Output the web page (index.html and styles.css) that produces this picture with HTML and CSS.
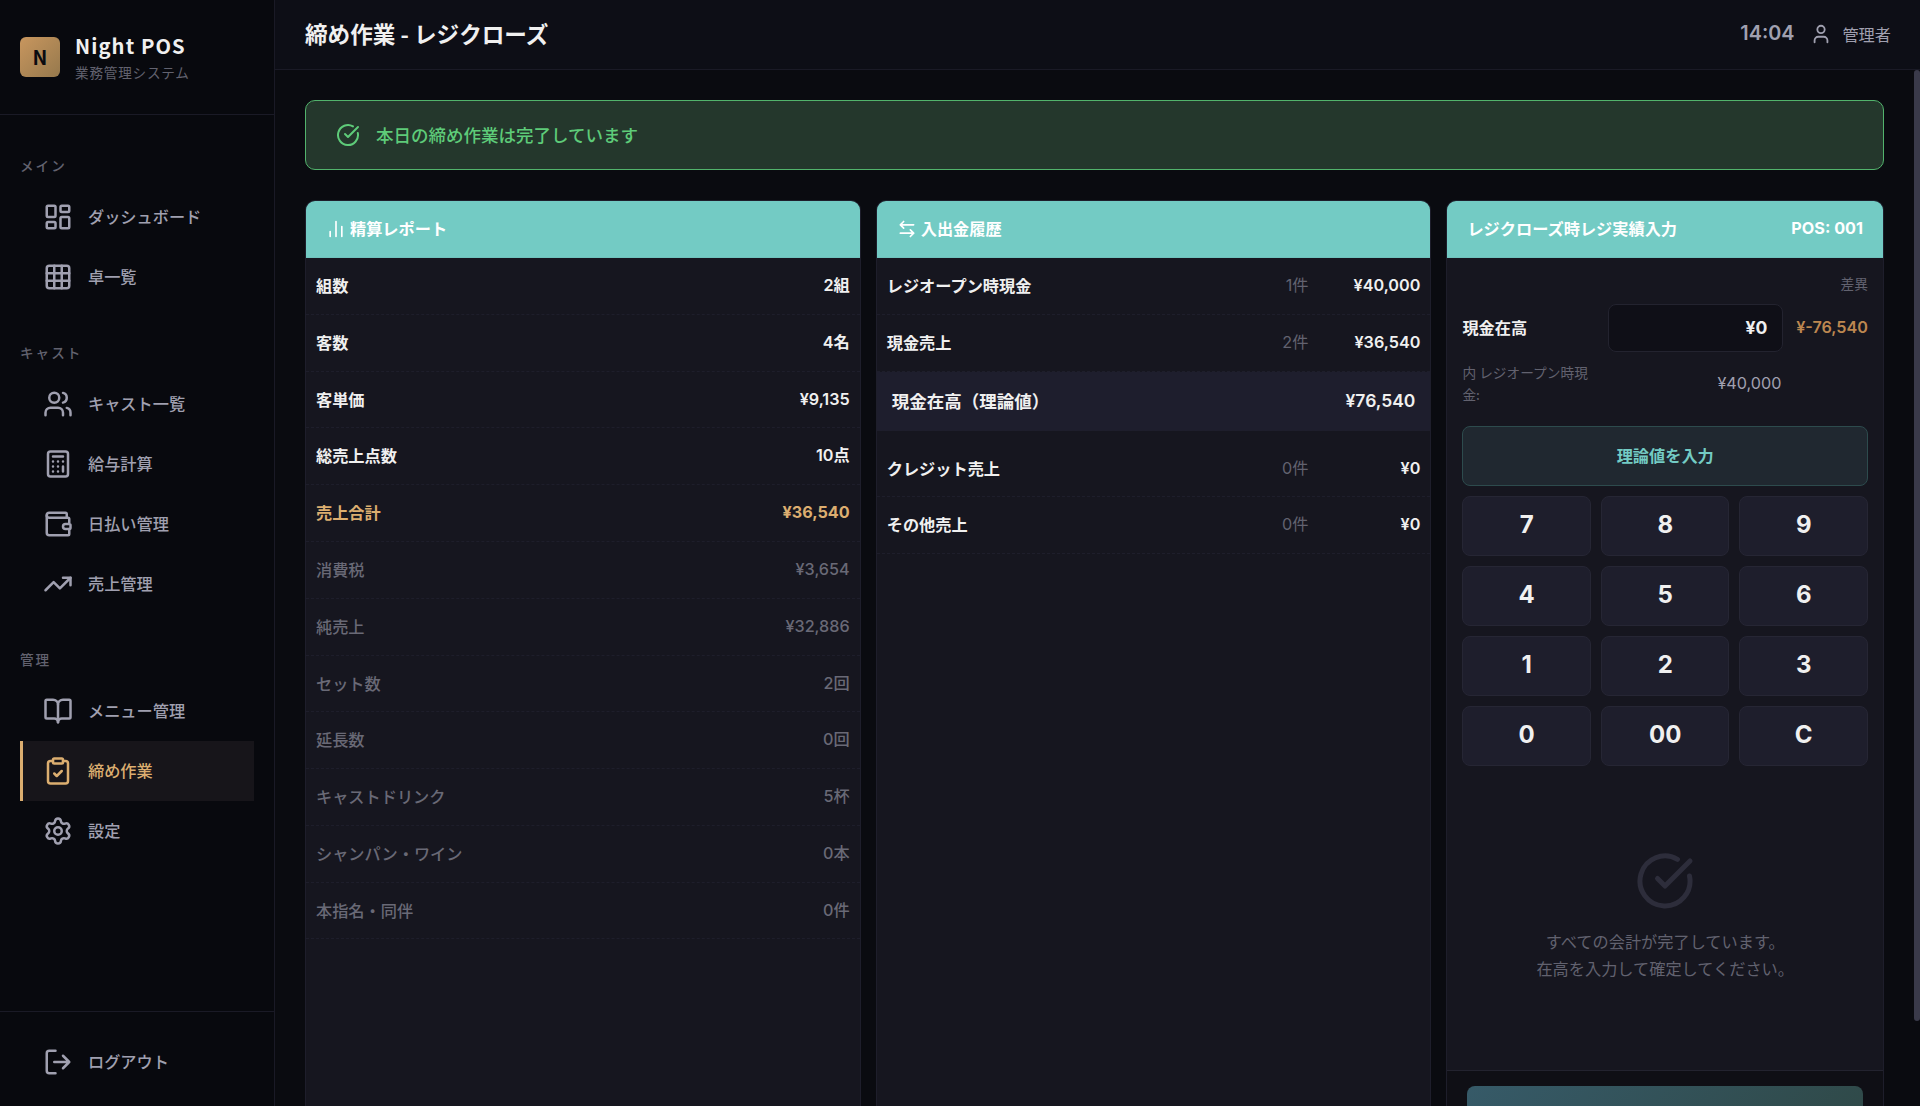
FILE: index.html
```html
<!DOCTYPE html>
<html lang="ja">
<head>
    <meta charset="UTF-8">
    <meta name="viewport" content="width=device-width, initial-scale=1.0">
    <title>締め作業 - Night POS</title>
    <link rel="stylesheet" href="styles.css">
</head>
<body>
    <div class="app">
        <!-- Sidebar -->
        <aside class="sidebar">
            <div class="sidebar-header">
                <div class="logo-icon">N</div>
                <div>
                    <div class="logo-title">Night POS</div>
                    <div class="logo-sub">業務管理システム</div>
                </div>
            </div>

            <nav class="sidebar-nav">
                <div class="nav-section">
                    <div class="nav-label">メイン</div>
                    <a class="nav-item">
                        <svg class="icon" viewBox="0 0 24 24"><rect x="3" y="3" width="7" height="9" rx="1"/><rect x="14" y="3" width="7" height="5" rx="1"/><rect x="14" y="12" width="7" height="9" rx="1"/><rect x="3" y="16" width="7" height="5" rx="1"/></svg>
                        <span>ダッシュボード</span>
                    </a>
                    <a class="nav-item">
                        <svg class="icon" viewBox="0 0 24 24"><rect x="3" y="3" width="18" height="18" rx="2"/><path d="M3 9h18M3 15h18M9 3v18M15 3v18"/></svg>
                        <span>卓一覧</span>
                    </a>
                </div>

                <div class="nav-section">
                    <div class="nav-label">キャスト</div>
                    <a class="nav-item">
                        <svg class="icon" viewBox="0 0 24 24"><path d="M16 21v-2a4 4 0 0 0-4-4H6a4 4 0 0 0-4 4v2"/><circle cx="9" cy="7" r="4"/><path d="M22 21v-2a4 4 0 0 0-3-3.87M16 3.13a4 4 0 0 1 0 7.75"/></svg>
                        <span>キャスト一覧</span>
                    </a>
                    <a class="nav-item">
                        <svg class="icon" viewBox="0 0 24 24"><rect x="4" y="2" width="16" height="20" rx="2"/><path d="M8 6h8M16 14v4M16 10h.01M12 10h.01M8 10h.01M12 14h.01M8 14h.01M12 18h.01M8 18h.01"/></svg>
                        <span>給与計算</span>
                    </a>
                    <a class="nav-item">
                        <svg class="icon" viewBox="0 0 24 24"><path d="M19 7V4a1 1 0 0 0-1-1H5a2 2 0 0 0 0 4h15a1 1 0 0 1 1 1v4h-3a2 2 0 0 0 0 4h3a1 1 0 0 0 1-1v-2a1 1 0 0 0-1-1"/><path d="M3 5v14a2 2 0 0 0 2 2h15a1 1 0 0 0 1-1v-4"/></svg>
                        <span>日払い管理</span>
                    </a>
                    <a class="nav-item">
                        <svg class="icon" viewBox="0 0 24 24"><path d="M22 7l-8.5 8.5-5-5L2 17"/><path d="M16 7h6v6"/></svg>
                        <span>売上管理</span>
                    </a>
                </div>

                <div class="nav-section">
                    <div class="nav-label">管理</div>
                    <a class="nav-item">
                        <svg class="icon" viewBox="0 0 24 24"><path d="M12 7v14"/><path d="M3 18a1 1 0 0 1-1-1V4a1 1 0 0 1 1-1h5a4 4 0 0 1 4 4 4 4 0 0 1 4-4h5a1 1 0 0 1 1 1v13a1 1 0 0 1-1 1h-6a3 3 0 0 0-3 3 3 3 0 0 0-3-3z"/></svg>
                        <span>メニュー管理</span>
                    </a>
                    <a class="nav-item active">
                        <svg class="icon" viewBox="0 0 24 24"><rect x="8" y="2" width="8" height="4" rx="1"/><path d="M16 4h2a2 2 0 0 1 2 2v14a2 2 0 0 1-2 2H6a2 2 0 0 1-2-2V6a2 2 0 0 1 2-2h2"/><path d="M9 14l2 2 4-4"/></svg>
                        <span>締め作業</span>
                    </a>
                    <a class="nav-item">
                        <svg class="icon" viewBox="0 0 24 24"><path d="M9.671 4.136a2.34 2.34 0 0 1 4.659 0 2.34 2.34 0 0 0 3.319 1.915 2.34 2.34 0 0 1 2.33 4.033 2.34 2.34 0 0 0 0 3.831 2.34 2.34 0 0 1-2.33 4.033 2.34 2.34 0 0 0-3.319 1.915 2.34 2.34 0 0 1-4.659 0 2.34 2.34 0 0 0-3.32-1.915 2.34 2.34 0 0 1-2.33-4.033 2.34 2.34 0 0 0 0-3.831A2.34 2.34 0 0 1 6.35 6.051a2.34 2.34 0 0 0 3.319-1.915"/><circle cx="12" cy="12" r="3"/></svg>
                        <span>設定</span>
                    </a>
                </div>
            </nav>

            <div class="sidebar-footer">
                <a class="nav-item">
                    <svg class="icon" viewBox="0 0 24 24"><path d="M10 3H5a2 2 0 0 0-2 2v14a2 2 0 0 0 2 2h5"/><path d="M16 17l5-5-5-5M21 12H9"/></svg>
                    <span>ログアウト</span>
                </a>
            </div>
        </aside>

        <!-- Main -->
        <div class="main">
            <header class="top-header">
                <h1>締め作業 - レジクローズ</h1>
                <div class="header-right">
                    <span class="clock">14:04</span>
                    <div class="user">
                        <svg class="icon" viewBox="0 0 24 24"><path d="M19 21v-2a4 4 0 0 0-4-4H9a4 4 0 0 0-4 4v2"/><circle cx="12" cy="7" r="4"/></svg>
                        <span>管理者</span>
                    </div>
                </div>
            </header>

            <main class="content">
                <div class="alert">
                    <svg class="icon" viewBox="0 0 24 24"><path d="M21.801 10A10 10 0 1 1 17 3.335"/><path d="M9 11l3 3L22 4"/></svg>
                    <span>本日の締め作業は完了しています</span>
                </div>

                <div class="panels">
                    <!-- Settlement report -->
                    <section class="panel">
                        <div class="panel-header">
                            <span class="panel-title"><svg class="icon" viewBox="0 0 24 24"><path d="M5 21v-6M12 21V3M19 21V9"/></svg>精算レポート</span>
                        </div>
                        <div class="row"><span>組数</span><span class="value">2組</span></div>
                        <div class="row"><span>客数</span><span class="value">4名</span></div>
                        <div class="row"><span>客単価</span><span class="value">¥9,135</span></div>
                        <div class="row"><span>総売上点数</span><span class="value">10点</span></div>
                        <div class="row total"><span>売上合計</span><span class="value">¥36,540</span></div>
                        <div class="row sub"><span>消費税</span><span class="value">¥3,654</span></div>
                        <div class="row sub"><span>純売上</span><span class="value">¥32,886</span></div>
                        <div class="row sub"><span>セット数</span><span class="value">2回</span></div>
                        <div class="row sub"><span>延長数</span><span class="value">0回</span></div>
                        <div class="row sub"><span>キャストドリンク</span><span class="value">5杯</span></div>
                        <div class="row sub"><span>シャンパン・ワイン</span><span class="value">0本</span></div>
                        <div class="row sub"><span>本指名・同伴</span><span class="value">0件</span></div>
                    </section>

                    <!-- Cash flow history -->
                    <section class="panel">
                        <div class="panel-header">
                            <span class="panel-title"><svg class="icon" viewBox="0 0 24 24"><path d="M8 3L4 7l4 4M4 7h16M16 21l4-4-4-4M20 17H4"/></svg>入出金履歴</span>
                        </div>
                        <div class="row"><span>レジオープン時現金</span><span class="count">1件</span><span class="value amount">¥40,000</span></div>
                        <div class="row"><span>現金売上</span><span class="count">2件</span><span class="value amount">¥36,540</span></div>
                        <div class="row highlight"><span>現金在高（理論値）</span><span class="value">¥76,540</span></div>
                        <div class="row"><span>クレジット売上</span><span class="count">0件</span><span class="value amount">¥0</span></div>
                        <div class="row"><span>その他売上</span><span class="count">0件</span><span class="value amount">¥0</span></div>
                    </section>

                    <!-- Register input -->
                    <section class="panel">
                        <div class="panel-header">
                            <span class="panel-title">レジクローズ時レジ実績入力</span>
                            <span class="pos-no">POS: 001</span>
                        </div>
                        <div class="register">
                            <div class="diff-label">差異</div>
                            <div class="cash-grid">
                                <span class="cash-label">現金在高</span>
                                <div class="cash-input">¥0</div>
                                <span class="cash-diff">¥-76,540</span>
                            </div>
                            <div class="cash-grid open-cash">
                                <span class="open-label">内 レジオープン時現金:</span>
                                <span class="open-value">¥40,000</span>
                            </div>
                            <button class="btn-theory">理論値を入力</button>
                            <div class="keypad">
                                <button>7</button><button>8</button><button>9</button>
                                <button>4</button><button>5</button><button>6</button>
                                <button>1</button><button>2</button><button>3</button>
                                <button>0</button><button>00</button><button>C</button>
                            </div>
                            <div class="done">
                                <svg class="icon" viewBox="0 0 24 24"><path d="M21.801 10A10 10 0 1 1 17 3.335"/><path d="M9 11l3 3L22 4"/></svg>
                                <p>すべての会計が完了しています。<br>在高を入力して確定してください。</p>
                            </div>
                        </div>
                        <div class="panel-footer">
                            <button class="btn-confirm" disabled></button>
                        </div>
                    </section>
                </div>
                <div class="scrollbar"></div>
            </main>
        </div>
    </div>
</body>
</html>
```
FILE: styles.css
```css
* {
    margin: 0;
    padding: 0;
    box-sizing: border-box;
}
body {
    font-family: 'Noto Sans CJK JP', sans-serif;
    font-size: 16.2px;
    line-height: 1.6;
    background: #0a0b10;
    color: #f0f0f0;
    overflow: hidden;
}
.app {
    display: flex;
    height: 100vh;
}
.icon {
    fill: none;
    stroke: currentColor;
    stroke-width: 2;
    stroke-linecap: round;
    stroke-linejoin: round;
    flex-shrink: 0;
}
button {
    font: inherit;
}

/* Sidebar */
.sidebar {
    width: 275px;
    flex-shrink: 0;
    display: flex;
    flex-direction: column;
    background: #08090e;
    border-right: 1px solid #1a1a26;
}
.sidebar-header {
    display: flex;
    align-items: center;
    gap: 15px;
    height: 115px;
    padding: 0 20px;
    border-bottom: 1px solid #1a1a26;
}
.logo-icon {
    width: 40px;
    height: 40px;
    display: flex;
    align-items: center;
    justify-content: center;
    border-radius: 6px;
    background: linear-gradient(135deg, #c8965e, #96794d);
    color: #0a0b10;
    font-size: 19.8px;
    font-weight: 700;
}
.logo-title {
    font-size: 20.2px;
    font-weight: 700;
    letter-spacing: 1.1px;
}
.logo-sub {
    font-size: 13.6px;
    letter-spacing: 0.8px;
    color: #62626f;
}
.sidebar-nav {
    flex: 1;
    padding: 40px 20px 0;
}
.nav-section {
    margin-bottom: 34.5px;
}
.nav-label {
    margin-bottom: 10.5px;
    font-size: 13.6px;
    font-weight: 500;
    letter-spacing: 2px;
    color: #62626f;
}
.nav-item {
    display: flex;
    align-items: center;
    gap: 15px;
    padding: 15px 20px;
    border-left: 3px solid transparent;
    color: #a0a0b0;
    font-weight: 500;
}
.nav-item .icon {
    width: 30px;
    height: 30px;
}
.nav-item.active {
    border-left-color: #dcae70;
    background: #17151a;
    color: #dcae70;
}
.sidebar-footer {
    padding: 20px 20px 14px;
    border-top: 1px solid #1a1a26;
}

/* Header */
.main {
    flex: 1;
    display: flex;
    flex-direction: column;
    min-width: 0;
}
.top-header {
    height: 70px;
    flex-shrink: 0;
    display: flex;
    align-items: center;
    justify-content: space-between;
    padding: 0 29px 0 30px;
    background: #0d0e16;
    border-bottom: 1px solid #1a1a26;
}
.top-header h1 {
    font-size: 22.6px;
    font-weight: 700;
}
.header-right, .user {
    display: flex;
    align-items: center;
    color: #a0a0b0;
}
.header-right {
    gap: 16px;
}
.user {
    gap: 10px;
}
.user .icon {
    width: 22px;
    height: 22px;
}
.clock {
    font-family: 'Inter', sans-serif;
    font-size: 19.8px;
    font-weight: 600;
    position: relative;
    top: -1px;
}

/* Content */
.content {
    position: relative;
    flex: 1;
    min-height: 0;
    padding: 30px 36px 0 30px;
    overflow: hidden;
}
.scrollbar {
    position: absolute;
    top: 0;
    right: 0;
    width: 6px;
    height: 951px;
    border-radius: 3px;
    background: #3a3a4a;
}
.alert {
    display: flex;
    align-items: center;
    gap: 16px;
    height: 70px;
    margin-bottom: 30px;
    padding: 0 30px;
    border: 1px solid #52b36c;
    border-radius: 10px;
    background: #24372c;
    color: #5ecb79;
    font-size: 17.5px;
    font-weight: 500;
}
.alert .icon {
    width: 24px;
    height: 24px;
}
.panels {
    display: grid;
    grid-template-columns: 1.27fr 1.27fr 1fr;
    gap: 15px;
    height: 962px;
}
.panel {
    display: flex;
    flex-direction: column;
    border: 1px solid #1e1e2b;
    border-radius: 10px;
    background: #16161f;
    overflow: hidden;
}
.panel-header {
    display: flex;
    align-items: center;
    justify-content: space-between;
    padding: 15px 20px;
    background: #73cbc4;
    border-bottom: 1px solid #6fc3bd;
    color: #fff;
    font-weight: 700;
}
.panel-title {
    display: flex;
    align-items: center;
    gap: 4px;
}
.panel-title .icon {
    width: 20px;
    height: 20px;
}
.pos-no {
    font-family: 'Inter', sans-serif;
}

/* Rows */
.row {
    display: flex;
    align-items: center;
    justify-content: space-between;
    padding: 15px 10px;
    border-bottom: 1px dashed #1e1e2b;
    font-weight: 700;
    line-height: 25.8px;
}
.value, .count {
    font-family: 'Inter', 'Noto Sans CJK JP', sans-serif;
}
.value {
    font-weight: 600;
}
.count {
    margin-left: auto;
    color: #62626f;
    font-weight: 400;
}
.amount {
    width: 112px;
    text-align: right;
}
.row.total {
    color: #dcae70;
}
.row.total .value {
    font-weight: 700;
}
.row.sub {
    color: #696976;
    font-weight: 500;
}
.row.sub .value {
    font-weight: 500;
}
.row.highlight {
    margin-bottom: 10px;
    padding: 15px;
    background: #1e1e2d;
    font-size: 17.5px;
    line-height: 28px;
}

/* Register */
.register {
    flex: 1;
    padding: 15px;
}
.diff-label {
    margin-bottom: 9px;
    font-size: 13.7px;
    text-align: right;
    color: #62626f;
}
.cash-grid {
    display: grid;
    grid-template-columns: 136px 175px 1fr;
    gap: 10px;
    align-items: center;
}
.cash-label {
    font-weight: 700;
}
.cash-input {
    height: 48px;
    padding: 0 15px;
    border: 1px solid #23232f;
    border-radius: 8px;
    background: #0f0f17;
    font-family: 'Inter', sans-serif;
    font-size: 17.6px;
    font-weight: 700;
    line-height: 46px;
    text-align: right;
}
.cash-diff {
    font-family: 'Inter', sans-serif;
    font-weight: 600;
    text-align: right;
    color: #bd8750;
}
.open-cash {
    margin: 10px 0 20px;
}
.open-label {
    font-size: 13.7px;
    color: #62626f;
}
.open-value {
    padding-right: 2px;
    font-family: 'Inter', sans-serif;
    text-align: right;
    color: #a0a0b0;
}
.btn-theory {
    display: block;
    width: 100%;
    height: 60px;
    margin-bottom: 10px;
    border: 1px solid #2d4b4d;
    border-radius: 8px;
    background: #202830;
    color: #73cbc4;
    font-weight: 700;
}
.keypad {
    display: grid;
    grid-template-columns: repeat(3, 1fr);
    gap: 10px;
}
.keypad button {
    height: 60px;
    border: 1px solid #262634;
    border-radius: 8px;
    background: #1e1e2c;
    color: #f0f0f0;
    font-family: 'Inter', sans-serif;
    font-size: 24px;
    font-weight: 700;
}
.done {
    padding-top: 85px;
    text-align: center;
    line-height: 27px;
    color: #62626f;
}
.done .icon {
    display: block;
    width: 60px;
    height: 60px;
    margin: 0 auto 17px;
    color: #2d2d3b;
}
.panel-footer {
    padding: 15px 20px;
    border-top: 1px solid #23232f;
    background: #0f0f15;
}
.btn-confirm {
    display: block;
    width: 100%;
    height: 60px;
    border: none;
    border-radius: 8px;
    background: linear-gradient(135deg, #365a68, #2f4846);
}
```
